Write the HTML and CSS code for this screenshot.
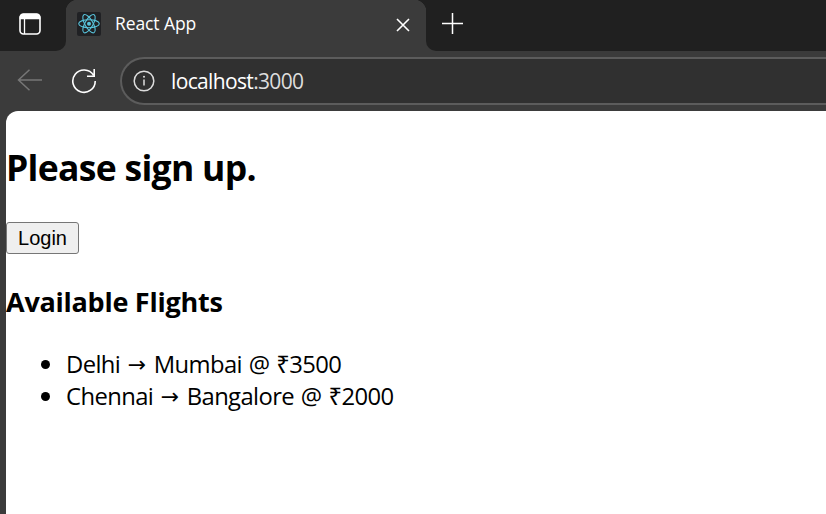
FILE: index.html
```html
<!DOCTYPE html>
<html lang="en">
<head>
<meta charset="utf-8">
<title>React App</title>
<link rel="stylesheet" href="styles.css">
</head>
<body>
<header class="tabstrip">
  <div class="tab-actions">
    <svg width="22" height="22" viewBox="0 0 22 22" fill="none" stroke="#fff" stroke-width="1.6"><rect x="1" y="1" width="20" height="20" rx="3.5"/><path d="M1.5 3.5Q2 1.5 4 1.5H18Q20 1.5 20.5 3.5V5.5H1.5Z" fill="#fff"/><path d="M5.5 6V21" stroke-width="1.3"/></svg>
  </div>
  <div class="tab">
    <svg class="favicon" width="24" height="24" viewBox="0 0 24 24" fill="none" stroke="#58c4dc" stroke-width="1.1"><rect width="24" height="24" rx="2" fill="#202124" stroke="none"/><g transform="translate(12 11.7)"><ellipse rx="10.3" ry="4"/><ellipse rx="10.3" ry="4" transform="rotate(60)"/><ellipse rx="10.3" ry="4" transform="rotate(120)"/><circle r="2" fill="#58c4dc" stroke="none"/></g></svg>
    <span class="tab-title">React App</span>
    <svg class="close" width="14" height="14" viewBox="0 0 14 14" stroke="#fff" stroke-width="1.6"><path d="M1 1 13 13M13 1 1 13"/></svg>
  </div>
  <div class="new-tab">
    <svg width="21" height="21" viewBox="0 0 21 21" stroke="#fff" stroke-width="1.5"><path d="M10.5 0V21M0 10.5H21"/></svg>
  </div>
</header>
<nav class="toolbar">
  <svg class="back" width="26" height="22" viewBox="0 0 26 22" fill="none" stroke="#777" stroke-width="1.5"><path d="M25 11H1.5M12.5 .8 1.5 11 12.5 21.2"/></svg>
  <svg class="reload" width="26" height="26" viewBox="0 0 26 26" fill="none" stroke="#fff" stroke-width="1.6"><path d="M24.2 13A11.2 11.2 0 1 1 22.5 7.2M23.2 1V8.2H16"/></svg>
  <div class="address">
    <svg width="22" height="22" viewBox="0 0 22 22" fill="none" stroke="#ddd" stroke-width="1.5"><circle cx="11" cy="11" r="9.8"/><path d="M11 9.5V15.5"/><circle cx="11" cy="6.8" r="1" fill="#ddd" stroke="none"/></svg>
    <span class="url"><b>localhost</b><i>:3000</i></span>
  </div>
</nav>
<main class="page">
  <h1>Please sign up.</h1>
  <button type="button">Login</button>
  <h2>Available Flights</h2>
  <ul>
    <li>Delhi <span class="arrow">→</span> Mumbai @ ₹3500</li>
    <li>Chennai <span class="arrow">→</span> Bangalore @ ₹2000</li>
  </ul>
</main>
</body>
</html>
```
FILE: styles.css
```css
* { box-sizing: border-box; }
body {
  margin: 0;
  height: 514px;
  overflow: hidden;
  background: #3b3b3b;
  font-family: "Open Sans", "Noto Sans", sans-serif;
}
svg { display: block; flex: none; }
.tabstrip { display: flex; height: 51px; background: #3b3b3b; }
.tab-actions {
  width: 66px;
  padding: 13px 0 0 19px;
  background: #202020;
  border-bottom-right-radius: 10px;
}
.tab {
  display: flex;
  width: 360px;
  padding: 12px 16px 0 11px;
  background: radial-gradient(circle at 12px 12px, #3b3b3b 12px, #202020 12.7px) 0 0 / 12px 12px no-repeat,
    radial-gradient(circle at 0 12px, #3b3b3b 12px, #202020 12.7px) 100% 0 / 12px 12px no-repeat, #3b3b3b;
}
.tab-title {
  margin: -1px 0 0 14px;
  color: #fff;
  font-size: 17.5px;
  line-height: 24px;
  letter-spacing: -0.1px;
}
.close { margin: 6px 0 0 auto; }
.new-tab {
  flex: 1;
  padding: 13px 0 0 16px;
  background: #202020;
  border-bottom-left-radius: 10px;
}
.toolbar { display: flex; height: 60px; overflow: hidden; }
.back { margin: 18px 0 0 17px; }
.reload { margin: 17px 0 0 28px; }
.address {
  display: flex;
  flex: 1;
  height: 48px;
  margin: 6px 0 0 23px;
  padding: 11px 0 0 11px;
  background: #303030;
  border: 2px solid #5c5c5c;
  border-right: 0;
  border-radius: 24px 0 0 24px;
}
.url {
  margin: -1px 0 0 16px;
  font-size: 21px;
  line-height: 24px;
  letter-spacing: -0.65px;
}
.url b { color: #fff; font-weight: 400; }
.url i { color: #ddd; font-style: normal; }
.page {
  height: 403px;
  margin-left: 6px;
  background: #fff;
  border-top-left-radius: 12px;
  color: #000;
  overflow: hidden;
}
h1 {
  margin: 32px 0 0;
  font-size: 35.5px;
  line-height: 48px;
  font-weight: 700;
  letter-spacing: -0.7px;
}
button {
  display: block;
  width: 73px;
  height: 32px;
  margin: 31px 0 0;
  padding: 0;
  border: 1px solid #767676;
  border-radius: 3px;
  background: #efefef;
  color: #000;
  font: 20px/30px "Liberation Sans", sans-serif;
}
h2 {
  margin: 30px 0 0;
  font-size: 27px;
  line-height: 36px;
  font-weight: 700;
  letter-spacing: -0.25px;
}
ul { margin: 27px 0 0; padding-left: 60px; }
li {
  height: 32px;
  font-size: 23.8px;
  line-height: 32px;
  letter-spacing: -0.6px;
  word-spacing: 1.2px;
}
li::marker { font-size: 26px; }
.arrow {
  display: inline-block;
  width: 20px;
  font: 22px/20px "DejaVu Sans", sans-serif;
  letter-spacing: 0;
  text-align: center;
  vertical-align: 1px;
}
```
